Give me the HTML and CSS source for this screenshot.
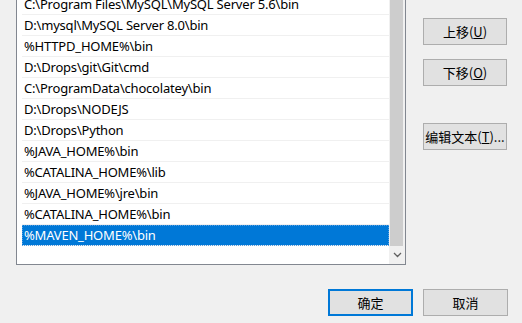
FILE: index.html
```html
<!DOCTYPE html>
<html lang="zh-CN">
<head>
    <meta charset="UTF-8">
    <meta name="viewport" content="width=device-width, initial-scale=1.0">
    <title>编辑环境变量</title>
    <link rel="stylesheet" href="styles.css">
</head>
<body>
    <div class="dialog">
        <div class="main">
            <div class="list-box">
                <ul class="path-list">
                    <li>C:\Program Files\MySQL\MySQL Server 5.6\bin</li>
                    <li>D:\mysql\MySQL Server 8.0\bin</li>
                    <li>%HTTPD_HOME%\bin</li>
                    <li>D:\Drops\git\Git\cmd</li>
                    <li>C:\ProgramData\chocolatey\bin</li>
                    <li>D:\Drops\NODEJS</li>
                    <li>D:\Drops\Python</li>
                    <li>%JAVA_HOME%\bin</li>
                    <li>%CATALINA_HOME%\lib</li>
                    <li>%JAVA_HOME%\jre\bin</li>
                    <li>%CATALINA_HOME%\bin</li>
                    <li class="selected">%MAVEN_HOME%\bin</li>
                </ul>
                <div class="scrollbar">
                    <div class="thumb"></div>
                    <div class="arrow">
                        <svg width="9" height="6" viewBox="0 0 9 6">
                            <path d="M1 1 L4.5 4.5 L8 1" fill="none" stroke="#606060" stroke-width="1.3"/>
                        </svg>
                    </div>
                </div>
            </div>

            <div class="side-buttons">
                <button type="button">上移(<u>U</u>)</button>
                <button type="button">下移(<u>O</u>)</button>
                <button type="button" class="edit-button">编辑文本(<u>T</u>)...</button>
            </div>
        </div>

        <div class="footer">
            <button type="button" class="default-button">确定</button>
            <button type="button">取消</button>
        </div>
    </div>
</body>
</html>
```

FILE: styles.css
```css
body {
    margin: 0;
    background-color: #f0f0f0;
    font-family: "Noto Sans", "Noto Sans CJK SC", sans-serif;
    overflow: hidden;
}

.dialog {
    width: 522px;
    height: 323px;
    padding-left: 16px;
    box-sizing: border-box;
}

.main {
    display: flex;
    align-items: flex-start;
    gap: 17px;
}

.list-box {
    width: 390px;
    height: 272px;
    margin-top: -7px;
    border: 1px solid #828790;
    background-color: #fff;
    box-sizing: border-box;
    display: flex;
}

.path-list {
    flex: 1;
    list-style: none;
    margin: 0;
    padding: 0;
}

.path-list li {
    height: 20px;
    line-height: 20px;
    margin-left: 5px;
    padding-left: 2px;
    border-bottom: 1px solid #f0f0f0;
    font-size: 13px;
    letter-spacing: -0.2px;
    color: #000;
    white-space: nowrap;
}

.path-list li.selected {
    background-color: #0078d7;
    color: #fff;
    outline: 1px dotted #5aa0e0;
    outline-offset: -1px;
}

.scrollbar {
    width: 16px;
    background-color: #f0f0f0;
    display: flex;
    flex-direction: column;
}

.scrollbar .thumb {
    flex: 1;
    margin: 0 2px 0 1px;
    background-color: #cdcdcd;
}

.scrollbar .arrow {
    height: 18px;
    display: flex;
    align-items: center;
    justify-content: center;
}

.side-buttons {
    display: flex;
    flex-direction: column;
    gap: 14px;
    padding-top: 18px;
}

button {
    width: 84px;
    height: 27px;
    padding: 0;
    background-color: #e1e1e1;
    border: 1px solid #adadad;
    font-family: "Noto Sans CJK SC", sans-serif;
    font-size: 13px;
    color: #000;
    box-sizing: border-box;
}

.side-buttons .edit-button {
    margin-top: 23px;
}

.footer {
    display: flex;
    justify-content: flex-end;
    gap: 10px;
    margin-top: 24px;
    padding-right: 14px;
}

.footer button {
    width: 85px;
}

.footer .default-button {
    border: 2px solid #0078d7;
}
```
